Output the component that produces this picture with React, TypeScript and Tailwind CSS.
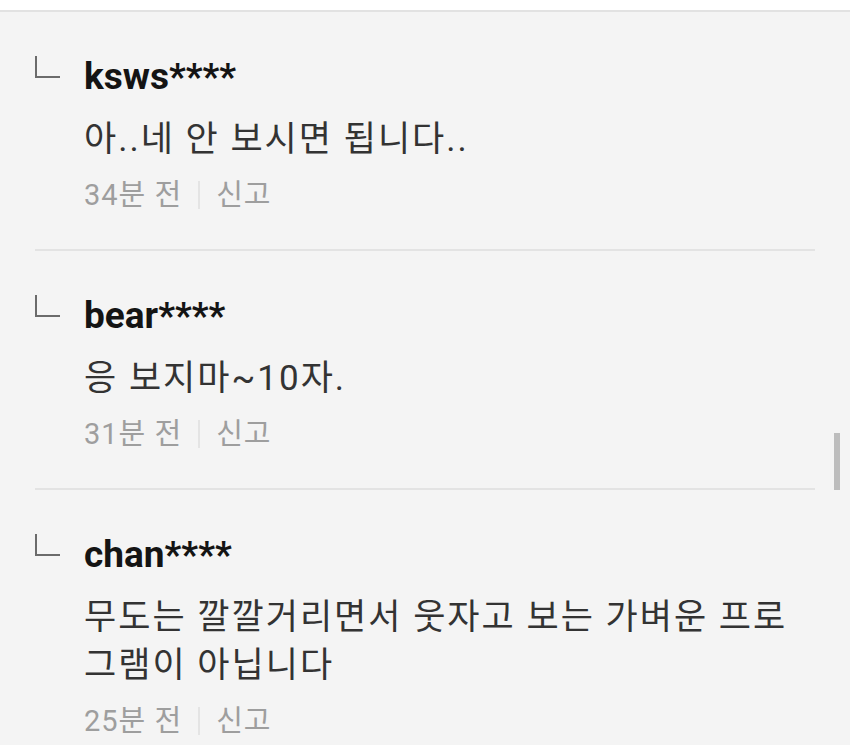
const comments = [
  { user: 'ksws****', lines: ['아..네 안 보시면 됩니다..'], time: '34분 전' },
  { user: 'bear****', lines: ['응 보지마~10자.'], time: '31분 전' },
  {
    user: 'chan****',
    lines: ['무도는 깔깔거리면서 웃자고 보는 가벼운 프로', '그램이 아닙니다'],
    time: '25분 전',
  },
];

const font = { fontFamily: 'Roboto, "Noto Sans CJK KR", sans-serif' };

function ReplyMark() {
  return (
    <svg width="26" height="24" viewBox="0 0 26 24" className="shrink-0">
      <path d="M1 0 V21 H25" fill="none" stroke="#6b6b6b" strokeWidth="2" />
    </svg>
  );
}

function Comment({ user, lines, time, last }: { user: string; lines: string[]; time: string; last?: boolean }) {
  return (
    <div className={last ? 'pt-[40px]' : 'pt-[40px] pb-[34px] border-b-2 border-[#e3e3e3]'}>
      <div className="flex">
        <div className="w-[49px] pt-[4px]">
          <ReplyMark />
        </div>
        <div className="flex flex-col">
          <div className="text-[37px] leading-[50px] font-bold text-[#141414]">{user}</div>
          <div className="mt-[14px] text-[35px] leading-[48px] tracking-[2px] text-[#333]">
            {lines.map((l) => (
              <div key={l}>{l}</div>
            ))}
          </div>
          <div className="mt-[11px] flex items-center text-[29px] leading-[40px] tracking-[1px] text-[#9e9e9e]">
            <span>{time}</span>
            <span className="mx-[16px] h-[28px] w-[2px] bg-[#e4e4e4]" />
            <span>신고</span>
          </div>
        </div>
      </div>
    </div>
  );
}

export default function App() {
  return (
    <div className="relative w-[850px] h-[745px] overflow-hidden bg-[#f4f4f4]" style={font}>
      <div className="h-[12px] bg-white border-b-2 border-[#e2e2e2]" />
      <div className="mx-[35px]">
        {comments.map((c, i) => (
          <Comment key={c.user} {...c} last={i === comments.length - 1} />
        ))}
      </div>
      <div className="absolute left-[834px] top-[433px] w-[6px] h-[57px] bg-[#bdbdbd]" />
    </div>
  );
}
